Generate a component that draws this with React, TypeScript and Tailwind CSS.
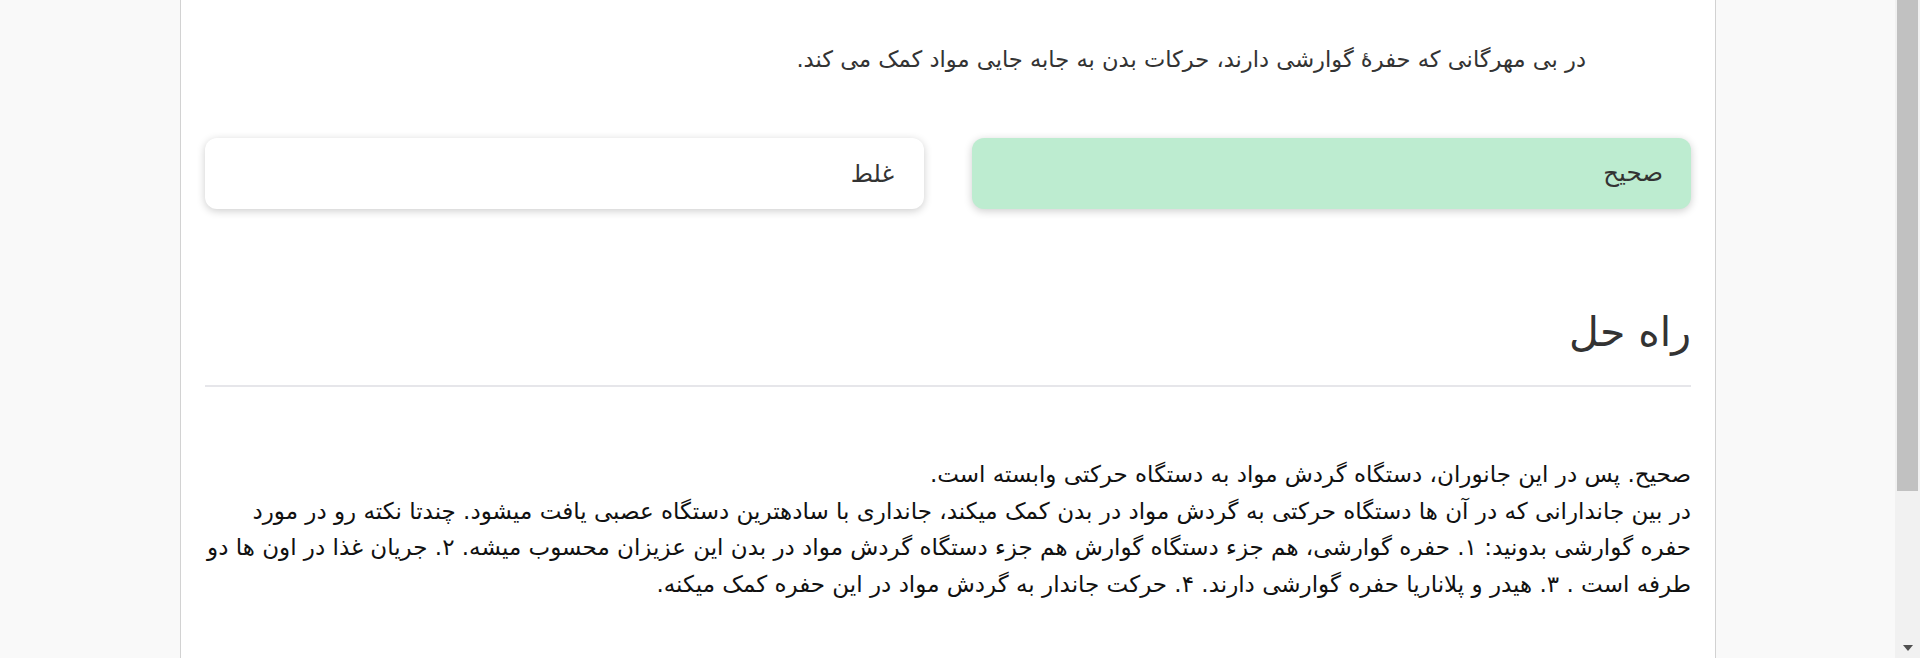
import React from "react";

const fa = { fontFamily: '"DejaVu Sans", sans-serif' };

export default function App() {
  return (
    <div className="flex h-[658px] w-[1920px] overflow-hidden bg-[#f9f9f9]" style={fa}>
      <div className="w-[180px] shrink-0 bg-[#f9f9f9]" />
      <div className="w-[1536px] shrink-0 border-x border-[#d2d2d2] bg-white px-[24px]" dir="rtl">
        <p className="pr-[105px] pt-[43px] text-[22.6px] leading-[32px] text-[#333]">
          در بی مهرگانی که حفرهٔ گوارشی دارند، حرکات بدن به جابه جایی مواد کمک می کند.
        </p>
        <div className="mt-[63px] grid grid-cols-2 gap-[48px]">
          <div className="flex h-[71px] items-center rounded-[12px] bg-[#bdecd0] pr-[28px] text-[24.5px] text-[#333] shadow-[0_2px_9px_rgba(0,0,0,0.2)]">
            صحیح
          </div>
          <div className="flex h-[71px] items-center rounded-[12px] bg-white pr-[30px] text-[24px] text-[#333] shadow-[0_2px_9px_rgba(0,0,0,0.2)]">
            غلط
          </div>
        </div>
        <h2 className="mt-[99px] pb-[29px] text-[41px] leading-[48px] text-[#333]">راه حل</h2>
        <div className="h-[2px] bg-[#e6e6ea]" />
        <p className="mt-[69px] text-[23px] leading-[36.5px] text-[#111]">
          صحیح. پس در این جانوران، دستگاه گردش مواد به دستگاه حرکتی وابسته است.
          <br />
          در بین جاندارانی که در آن ها دستگاه حرکتی به گردش مواد در بدن کمک میکند، جانداری با سادهترین دستگاه عصبی یافت میشود. چندتا نکته رو در مورد
          <br />
          حفره گوارشی بدونید: ۱. حفره گوارشی، هم جزء دستگاه گوارش هم جزء دستگاه گردش مواد در بدن این عزیزان محسوب میشه. ۲. جریان غذا در اون ها دو
          <br />
          طرفه است . ۳. هیدر و پلاناریا حفره گوارشی دارند. ۴. حرکت جاندار به گردش مواد در این حفره کمک میکنه.
        </p>
      </div>
      <div className="flex-1 bg-[#f9f9f9]" />
      <div className="flex w-[25px] shrink-0 flex-col bg-[#f1f1f1]">
        <div className="ml-[2px] mr-[2px] h-[491px] bg-[#c1c1c1]" />
        <div className="flex-1" />
        <div className="flex h-[14px] items-start justify-center">
          <svg width="12" height="8" viewBox="0 0 12 8">
            <path d="M1 1 L11 1 L6 7 Z" fill="#505050" />
          </svg>
        </div>
      </div>
    </div>
  );
}
